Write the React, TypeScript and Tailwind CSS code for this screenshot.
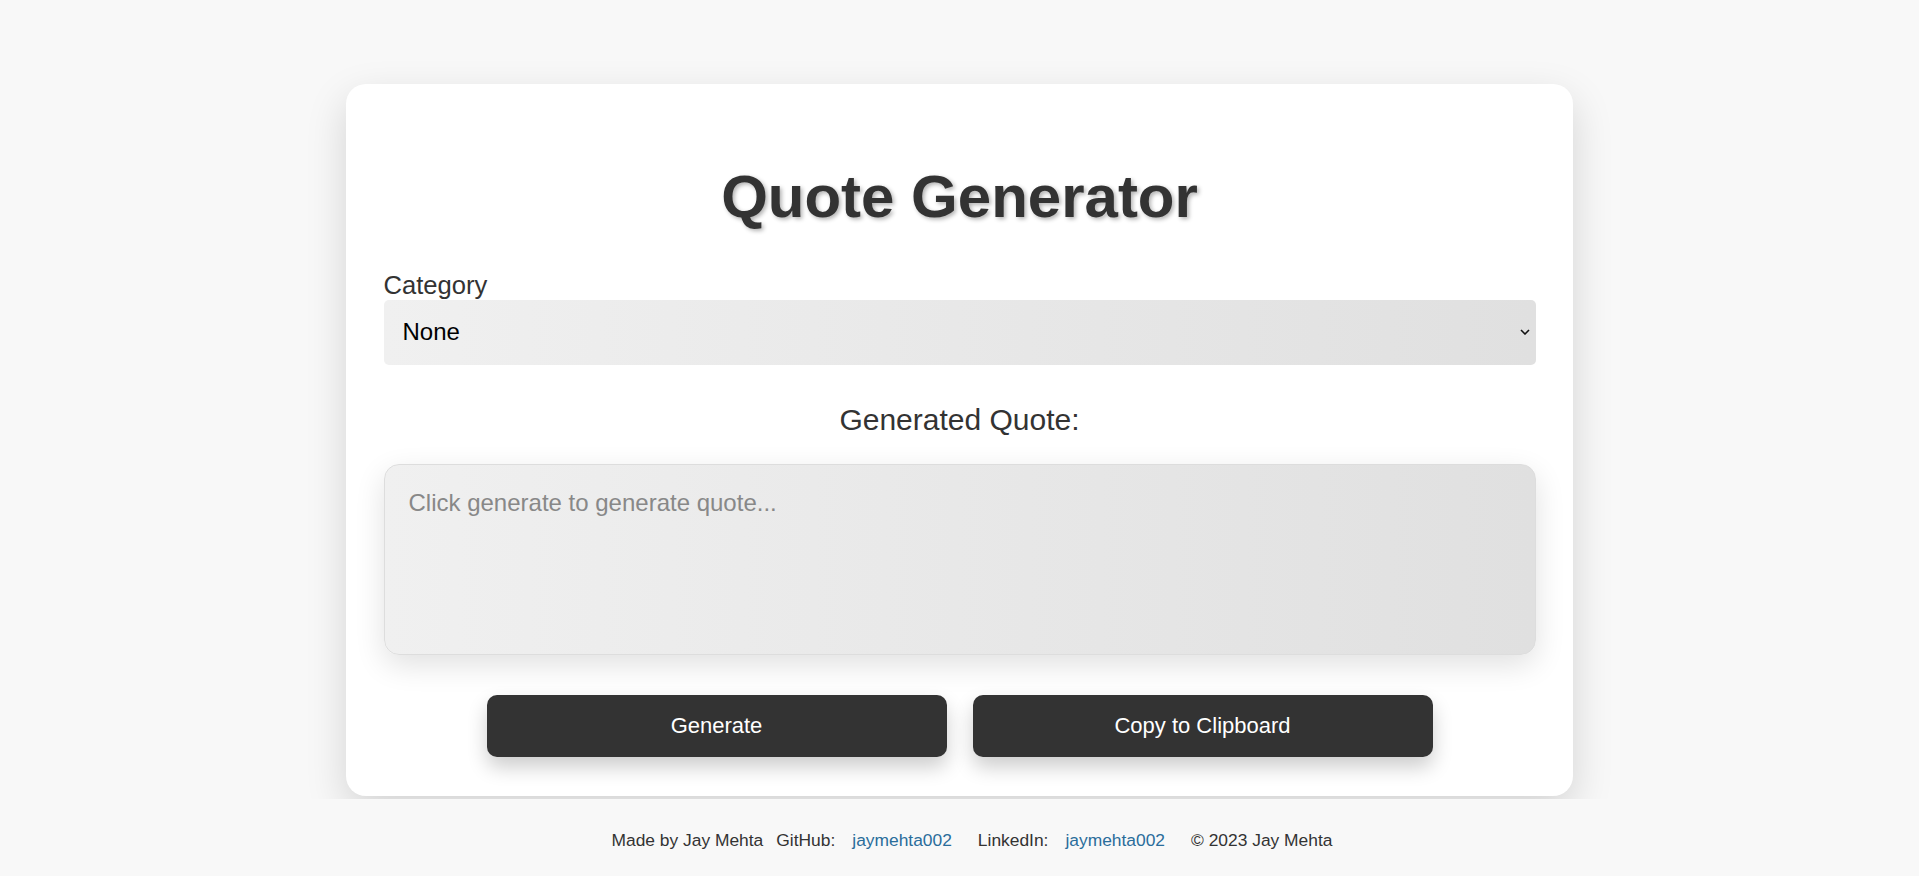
import { useState } from "react";

const quotes: Record<string, string[]> = {
  none: ["The only way to do great work is to love what you do."],
  life: ["Life is what happens when you're busy making other plans."],
  success: ["Success is not final, failure is not fatal."],
};

export default function App() {
  const [category, setCategory] = useState("none");
  const [quote, setQuote] = useState("");

  function generate() {
    const list = quotes[category] || quotes.none;
    setQuote(list[Math.floor(Math.random() * list.length)]);
  }

  return (
    <div className="min-h-screen bg-[#f8f8f8] text-[#333] font-['Liberation_Sans',Arial,sans-serif]">
      <main className="pt-[84px] pb-[3px]">
        <div className="mx-auto w-[1227px] rounded-[20px] bg-white px-[37.5px] pt-[37.5px] pb-[39.5px] shadow-[0_15px_40px_rgba(0,0,0,0.15)]">
          <h1 className="mt-[40px] mb-[40px] text-center text-[60px] font-bold leading-[69px] text-[#333] [text-shadow:2px_2px_4px_rgba(0,0,0,0.3)]">
            Quote Generator
          </h1>

          <label htmlFor="category" className="block text-[25.6px] leading-[29.4px]">
            Category
          </label>
          <div className="relative">
            <select
              id="category"
              value={category}
              onChange={(e) => setCategory(e.target.value)}
              className="block h-[65px] w-full appearance-none rounded-[5px] border-0 bg-gradient-to-r from-[#f0f0f0] to-[#e0e0e0] pl-[19px] pr-[30px] text-[24px] text-black outline-none"
            >
              <option value="none">None</option>
              <option value="life">Life</option>
              <option value="success">Success</option>
            </select>
            {/* native-looking chevron */}
            <svg
              className="pointer-events-none absolute right-[6px] top-1/2 -translate-y-1/2"
              width="10"
              height="6"
              viewBox="0 0 10 6"
              fill="none"
            >
              <path d="M1 1 L5 5 L9 1" stroke="#111" strokeWidth="1.6" />
            </svg>
          </div>

          <h2 className="mt-[38px] mb-[26.5px] text-center text-[30px] leading-[34.5px] font-normal">
            Generated Quote:
          </h2>

          <textarea
            readOnly
            value={quote}
            placeholder="Click generate to generate quote..."
            className="block h-[191px] w-full resize-none rounded-[15px] border border-[#ddd] bg-gradient-to-r from-[#f0f0f0] to-[#e0e0e0] px-[24px] py-[24px] text-[24px] leading-[27.6px] text-[#333] shadow-[0_10px_30px_rgba(0,0,0,0.12)] outline-none placeholder:text-[#888]"
          />

          <div className="mt-[40px] flex justify-center gap-[26px]">
            <button
              onClick={generate}
              className="h-[62px] w-[460px] rounded-[10px] bg-[#333] text-[22px] text-white shadow-[0_10px_20px_rgba(0,0,0,0.2)]"
            >
              Generate
            </button>
            <button
              onClick={() => navigator.clipboard?.writeText(quote)}
              className="h-[62px] w-[460px] rounded-[10px] bg-[#333] text-[22px] text-white shadow-[0_10px_20px_rgba(0,0,0,0.2)]"
            >
              Copy to Clipboard
            </button>
          </div>
        </div>
      </main>

      <footer className="relative z-10 flex h-[78px] justify-center bg-[#f8f8f8] pt-[31px] pl-[25px] text-[17.4px] leading-[20px] text-[#333]">
        <span>Made by Jay Mehta</span>
        <span className="ml-[13px]">GitHub:</span>
        <a href="#" className="ml-[17px] text-[#2a6d9b]">jaymehta002</a>
        <span className="ml-[26px]">LinkedIn:</span>
        <a href="#" className="ml-[17px] text-[#2a6d9b]">jaymehta002</a>
        <span className="ml-[26px]">© 2023 Jay Mehta</span>
      </footer>
    </div>
  );
}
